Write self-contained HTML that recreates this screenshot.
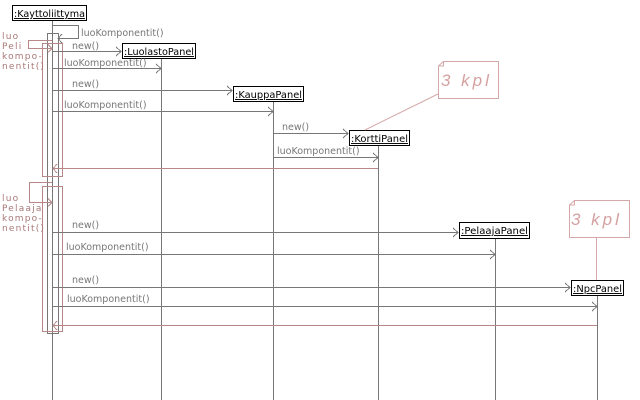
<!DOCTYPE html>
<html><head><meta charset="utf-8"><style>
html,body{margin:0;padding:0;background:#fff;width:640px;height:400px;overflow:hidden}
svg{display:block}
.g{stroke:#777;fill:none;stroke-width:1}
.r{stroke:#b88888;fill:none;stroke-width:1}
.pk{stroke:#d4a8a8;fill:none;stroke-width:1}
.t{font-family:"DejaVu Sans","Liberation Sans",sans-serif;font-size:9.5px;fill:#777}
.rt{font-family:"DejaVu Sans","Liberation Sans",sans-serif;font-size:9px;fill:#a87878;letter-spacing:1.2px}
.b{font-family:"DejaVu Sans","Liberation Sans",sans-serif;font-size:9.5px;fill:#000;text-decoration:underline}
.n{font-family:"Liberation Sans",sans-serif;font-style:italic;font-size:17px;fill:#d4a0a0;letter-spacing:3px}
</style></head><body>
<svg width="640" height="400" viewBox="0 0 640 400" shape-rendering="crispEdges">
<line class="g" x1="52.5" y1="20" x2="52.5" y2="400"/>
<line class="g" x1="161.5" y1="59" x2="161.5" y2="400"/>
<line class="g" x1="273.5" y1="102" x2="273.5" y2="400"/>
<line class="g" x1="378.5" y1="145" x2="378.5" y2="400"/>
<line class="g" x1="495.5" y1="238" x2="495.5" y2="400"/>
<line class="g" x1="597.5" y1="295" x2="597.5" y2="400"/>
<rect class="g" x="47.5" y="33.5" width="11" height="300"/>
<rect class="r" x="42.5" y="43.5" width="20" height="133"/>
<rect class="r" x="42.5" y="186.5" width="20" height="145"/>
<polyline class="g" points="52.5,25.5 78.5,25.5 78.5,38.5 58,38.5"/>
<polyline class="g" points="62,34 58,38.5 62,43"/>
<text class="t" x="81" y="36">luoKomponentit()</text>
<polyline class="r" points="52,40.5 28.5,40.5 28.5,48.5 52,48.5"/>
<polyline class="r" points="48,44.5 52,48.5 48,52.5"/>
<polyline class="r" points="52,182.5 29.5,182.5 29.5,202.5 52,202.5"/>
<polyline class="r" points="48,198.5 52,202.5 48,206.5"/>
<text class="rt" x="2" y="39">luo</text>
<text class="rt" x="2" y="49">Peli</text>
<text class="rt" x="2" y="59">kompo-</text>
<text class="rt" x="2" y="69">nentit()</text>
<text class="rt" x="2" y="201">luo</text>
<text class="rt" x="2" y="211">Pelaaja</text>
<text class="rt" x="2" y="221">kompo-</text>
<text class="rt" x="2" y="231">nentit()</text>
<rect x="12.5" y="5.5" width="74" height="15" fill="#fff" stroke="#000"/>
<text class="b" x="14" y="17" textLength="71" lengthAdjust="spacingAndGlyphs">:Kayttoliittyma</text>
<rect x="122.5" y="43.5" width="73" height="15" fill="#fff" stroke="#000"/>
<text class="b" x="124" y="55" textLength="70" lengthAdjust="spacingAndGlyphs">:LuolastoPanel</text>
<rect x="233.5" y="86.5" width="70" height="15" fill="#fff" stroke="#000"/>
<text class="b" x="235" y="98" textLength="67" lengthAdjust="spacingAndGlyphs">:KauppaPanel</text>
<rect x="349.5" y="130.5" width="60" height="15" fill="#fff" stroke="#000"/>
<text class="b" x="351" y="142" textLength="57" lengthAdjust="spacingAndGlyphs">:KorttiPanel</text>
<rect x="459.5" y="222.5" width="70" height="16" fill="#fff" stroke="#000"/>
<text class="b" x="461" y="234" textLength="67" lengthAdjust="spacingAndGlyphs">:PelaajaPanel</text>
<rect x="571.5" y="280.5" width="52" height="15" fill="#fff" stroke="#000"/>
<text class="b" x="573" y="292" textLength="49" lengthAdjust="spacingAndGlyphs">:NpcPanel</text>
<line class="g" x1="52" y1="51.5" x2="121" y2="51.5"/><polyline class="g" points="116,47 121,51.5 116,56"/>
<text class="t" x="72" y="49">new()</text>
<line class="g" x1="52" y1="68.5" x2="161" y2="68.5"/><polyline class="g" points="156,64 161,68.5 156,73"/>
<text class="t" x="64" y="66">luoKomponentit()</text>
<line class="g" x1="52" y1="90.5" x2="232" y2="90.5"/><polyline class="g" points="227,86 232,90.5 227,95"/>
<text class="t" x="72" y="87">new()</text>
<line class="g" x1="52" y1="111.5" x2="273" y2="111.5"/><polyline class="g" points="268,107 273,111.5 268,116"/>
<text class="t" x="64" y="108">luoKomponentit()</text>
<line class="g" x1="273" y1="133.5" x2="348" y2="133.5"/><polyline class="g" points="343,129 348,133.5 343,138"/>
<text class="t" x="282" y="130">new()</text>
<line class="g" x1="273" y1="157.5" x2="378" y2="157.5"/><polyline class="g" points="373,153 378,157.5 373,162"/>
<text class="t" x="277" y="154">luoKomponentit()</text>
<line class="r" x1="53" y1="168.5" x2="378" y2="168.5"/><polyline class="r" points="57,164 53,168.5 57,173"/>
<line class="g" x1="52" y1="232.5" x2="458" y2="232.5"/><polyline class="g" points="453,228 458,232.5 453,237"/>
<text class="t" x="72" y="228">new()</text>
<line class="g" x1="52" y1="254.5" x2="495" y2="254.5"/><polyline class="g" points="490,250 495,254.5 490,259"/>
<text class="t" x="66" y="250">luoKomponentit()</text>
<line class="g" x1="52" y1="287.5" x2="570" y2="287.5"/><polyline class="g" points="565,283 570,287.5 565,292"/>
<text class="t" x="72" y="283">new()</text>
<line class="g" x1="52" y1="306.5" x2="597" y2="306.5"/><polyline class="g" points="592,302 597,306.5 592,311"/>
<text class="t" x="67" y="302">luoKomponentit()</text>
<line class="r" x1="53" y1="325.5" x2="597" y2="325.5"/><polyline class="r" points="57,321 53,325.5 57,330"/>
<g shape-rendering="auto">
<line class="pk" x1="365" y1="130" x2="438" y2="94"/>
<polygon class="pk" points="438.5,66 443.5,61.5 498.5,61.5 498.5,98.5 438.5,98.5"/>
<polyline class="pk" points="438.5,66 443.5,66 443.5,61.5"/>
<text class="n" x="441" y="86">3 kpl</text>
<line class="pk" x1="596.5" y1="237" x2="596.5" y2="280"/>
<polygon class="pk" points="569.5,205 574.5,200.5 629.5,200.5 629.5,237.5 569.5,237.5"/>
<polyline class="pk" points="569.5,205 574.5,205 574.5,200.5"/>
<text class="n" x="571" y="225">3 kpl</text>
</g>
</svg>
</body></html>
